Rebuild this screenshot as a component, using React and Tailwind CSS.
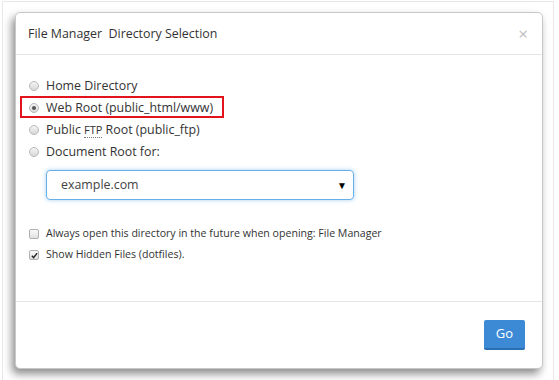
export default function App() {
  const font = { fontFamily: '"Open Sans", sans-serif' };
  return (
    <div className="w-[559px] h-[380px] bg-white overflow-hidden" style={font}>
      <div className="mt-[1px] ml-[2px] w-[552px] h-[400px] border-t border-l border-r border-[#e8e8e8] pt-[10px] pl-[12px]">
        <div className="w-[528px] h-[357px] bg-white rounded-[5px] border border-[#c8c8c8] shadow-[-3px_5px_8px_rgba(0,0,0,0.45)] flex flex-col">
          <div className="h-[42px] border-b border-[#e5e5e5] flex items-center justify-between pl-[12px] pr-[14px] shrink-0">
            <span className="text-[12.4px] text-[#333] pt-[1px]">File Manager&nbsp; Directory Selection</span>
            <span className="text-[17px] text-[#bdbdbd] leading-none">×</span>
          </div>
          <div className="flex-1 pl-[13px] pt-[20px] text-[#333]">
            <div className="flex flex-col">
              <Radio label="Home Directory" />
              <div className="relative">
                <div className="absolute left-[-9px] top-[-1px] w-[204px] h-[22px] border-2 border-[#e3131b]"></div>
                <Radio label="Web Root (public_html/www)" checked />
              </div>
              <Radio label={<span>Public <span className="border-b border-dotted border-[#777] text-[11px]">FTP</span> Root (public_ftp)</span>} />
              <Radio label="Document Root for:" />
            </div>
            <div className="ml-[17px] mt-[7px] w-[308px] h-[30px] rounded-[4px] border border-[#66afe9] shadow-[0_0_4px_rgba(102,175,233,0.6)] flex items-center justify-between pl-[14px] pr-[6px] text-[12.4px] text-[#444]">
              <span>example.com</span>
              <span className="text-[10px] text-black">▼</span>
            </div>
            <div className="mt-[26px] flex flex-col gap-[5px]">
              <Check label="Always open this directory in the future when opening: File Manager" />
              <Check label="Show Hidden Files (dotfiles)." checked />
            </div>
          </div>
          <div className="h-[67px] border-t border-[#e5e5e5] flex items-center justify-end pr-[17px] shrink-0">
            <button className="w-[41px] h-[30px] bg-[#3c8ad5] border-b-2 border-[#2a6fb3] rounded-[2px] text-white text-[13px]" style={font}>Go</button>
          </div>
        </div>
      </div>
    </div>
  );
}

function Radio({ label, checked }) {
  return (
    <div className="flex items-center h-[22px] text-[12.4px] text-[#333]">
      <span className="w-[10px] h-[10px] rounded-full border border-[#b8b8b8] bg-gradient-to-b from-[#f4f4f4] to-[#d8d8d8] flex items-center justify-center mr-[7px]">
        {checked && <span className="w-[4px] h-[4px] rounded-full bg-[#555]"></span>}
      </span>
      <span>{label}</span>
    </div>
  );
}

function Check({ label, checked }) {
  return (
    <div className="flex items-center h-[16px] text-[10.6px] text-[#333]">
      <span className="w-[10px] h-[10px] rounded-[2px] border border-[#b0b0b0] bg-gradient-to-b from-[#fafafa] to-[#e0e0e0] flex items-center justify-center mr-[7px]">
        {checked && (
          <svg width="7" height="7" viewBox="0 0 8 8"><path d="M1 4.2 L3 6.5 L7 1.2" stroke="#222" strokeWidth="1.6" fill="none" /></svg>
        )}
      </span>
      <span>{label}</span>
    </div>
  );
}
